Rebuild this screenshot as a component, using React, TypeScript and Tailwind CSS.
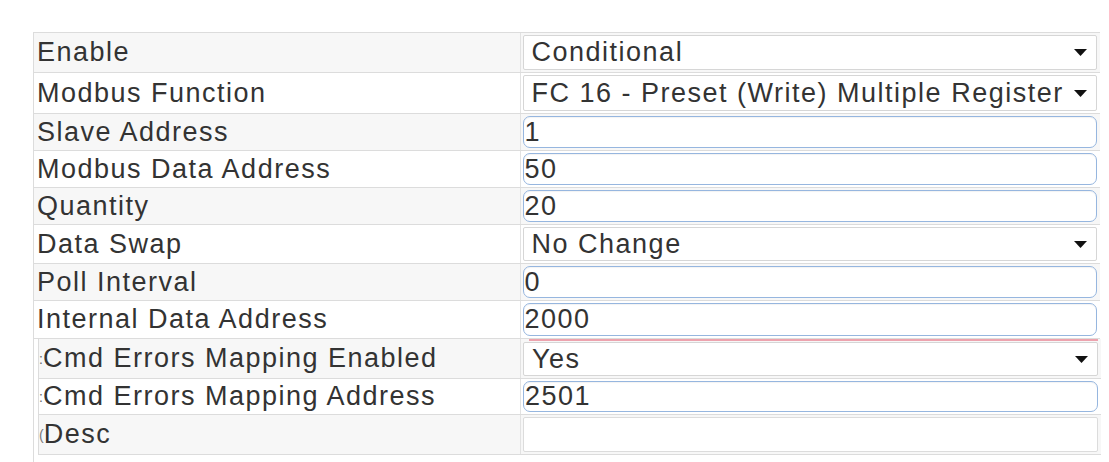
import React from "react";

type Row = {
  label: string;
  value: string;
  kind: "select" | "input" | "box";
  h: number;
  nested?: boolean;
  ghost?: string;
  pink?: boolean;
};

const rows: Row[] = [
  { label: "Enable", value: "Conditional", kind: "select", h: 40 },
  { label: "Modbus Function", value: "FC 16 - Preset (Write) Multiple Register", kind: "select", h: 41 },
  { label: "Slave Address", value: "1", kind: "input", h: 37 },
  { label: "Modbus Data Address", value: "50", kind: "input", h: 37 },
  { label: "Quantity", value: "20", kind: "input", h: 37 },
  { label: "Data Swap", value: "No Change", kind: "select", h: 39 },
  { label: "Poll Interval", value: "0", kind: "input", h: 37 },
  { label: "Internal Data Address", value: "2000", kind: "input", h: 38 },
];

const nestedRows: Row[] = [
  { label: "Cmd Errors Mapping Enabled", value: "Yes", kind: "select", h: 39, ghost: ":", pink: true },
  { label: "Cmd Errors Mapping Address", value: "2501", kind: "input", h: 36, ghost: ":" },
  { label: "Desc", value: "", kind: "box", h: 40, ghost: "(" },
];

function Caret() {
  return (
    <svg width="13" height="7" viewBox="0 0 13 7" className="shrink-0">
      <path d="M0 0 H13 L6.5 7 Z" fill="#111" />
    </svg>
  );
}

function Control({ row }: { row: Row }) {
  if (row.kind === "select") {
    return (
      <div className="h-full w-full bg-white border border-[#d6d6d6] rounded-[2px] flex items-center pl-[8px] pr-[9px]">
        <span className="flex-1 whitespace-nowrap overflow-hidden">{row.value}</span>
        <Caret />
      </div>
    );
  }
  if (row.kind === "input") {
    return (
      <div className="h-full w-full bg-white border border-[#96b6df] rounded-[7px] flex items-center pl-[1px] shadow-[inset_0_1px_1px_rgba(0,0,0,0.05)]">
        <span className="whitespace-nowrap">{row.value}</span>
      </div>
    );
  }
  return <div className="h-full w-full bg-white border border-[#dcdcdc] rounded-[2px]" />;
}

function TableRow({ row, stripe }: { row: Row; stripe: boolean }) {
  const bg = stripe ? "bg-[#f7f7f7]" : "bg-white";
  return (
    <div className={`flex border-t border-[#dcdcdc] ${bg}`} style={{ height: row.h }}>
      <div
        className={`flex items-center border-r border-[#e2e2e2] ${
          row.nested ? "w-[482px] pl-0" : "w-[487px] pl-[3px]"
        }`}
      >
        {row.ghost === ":" ? (
          <span className="tracking-normal text-[#666] text-[14px] leading-[16px]">:</span>
        ) : null}
        {row.ghost === "(" ? (
          <span className="tracking-normal text-[#777] text-[14px] leading-[16px]">(</span>
        ) : null}
        <span className="whitespace-nowrap">{row.label}</span>
      </div>
      <div className={`w-[580px] pl-[2px] pr-[3px] py-[2px] ${row.pink ? "pt-0" : ""} flex flex-col`}>
        {row.pink ? <div className="h-[2px] ml-[6px] bg-[#eda3ae] mb-[1px] shrink-0" /> : null}
        <div className="flex-1 min-h-0">
          <Control row={row} />
        </div>
      </div>
    </div>
  );
}

export default function App() {
  return (
    <div className="w-[1109px] h-[462px] bg-white overflow-hidden pt-[32px] pl-[33px] font-['Liberation_Sans',Arial,sans-serif] text-[27px] tracking-[1.5px] text-[#333] leading-[31px]">
      <div className="w-[1067px] h-full border-l border-[#dcdcdc]">
        {rows.map((r, i) => (
          <TableRow key={r.label} row={r} stripe={i % 2 === 0} />
        ))}
        <div className="flex border-t border-[#dcdcdc]">
          <div className="w-[4px] shrink-0" />
          <div className="flex-1 border-l border-b border-[#dcdcdc]">
            {nestedRows.map((r, i) => (
              <div key={r.label} className={i === 0 ? "[&>div]:border-t-0" : ""}>
                <TableRow row={{ ...r, nested: true }} stripe={i % 2 === 0} />
              </div>
            ))}
          </div>
        </div>
      </div>
    </div>
  );
}
